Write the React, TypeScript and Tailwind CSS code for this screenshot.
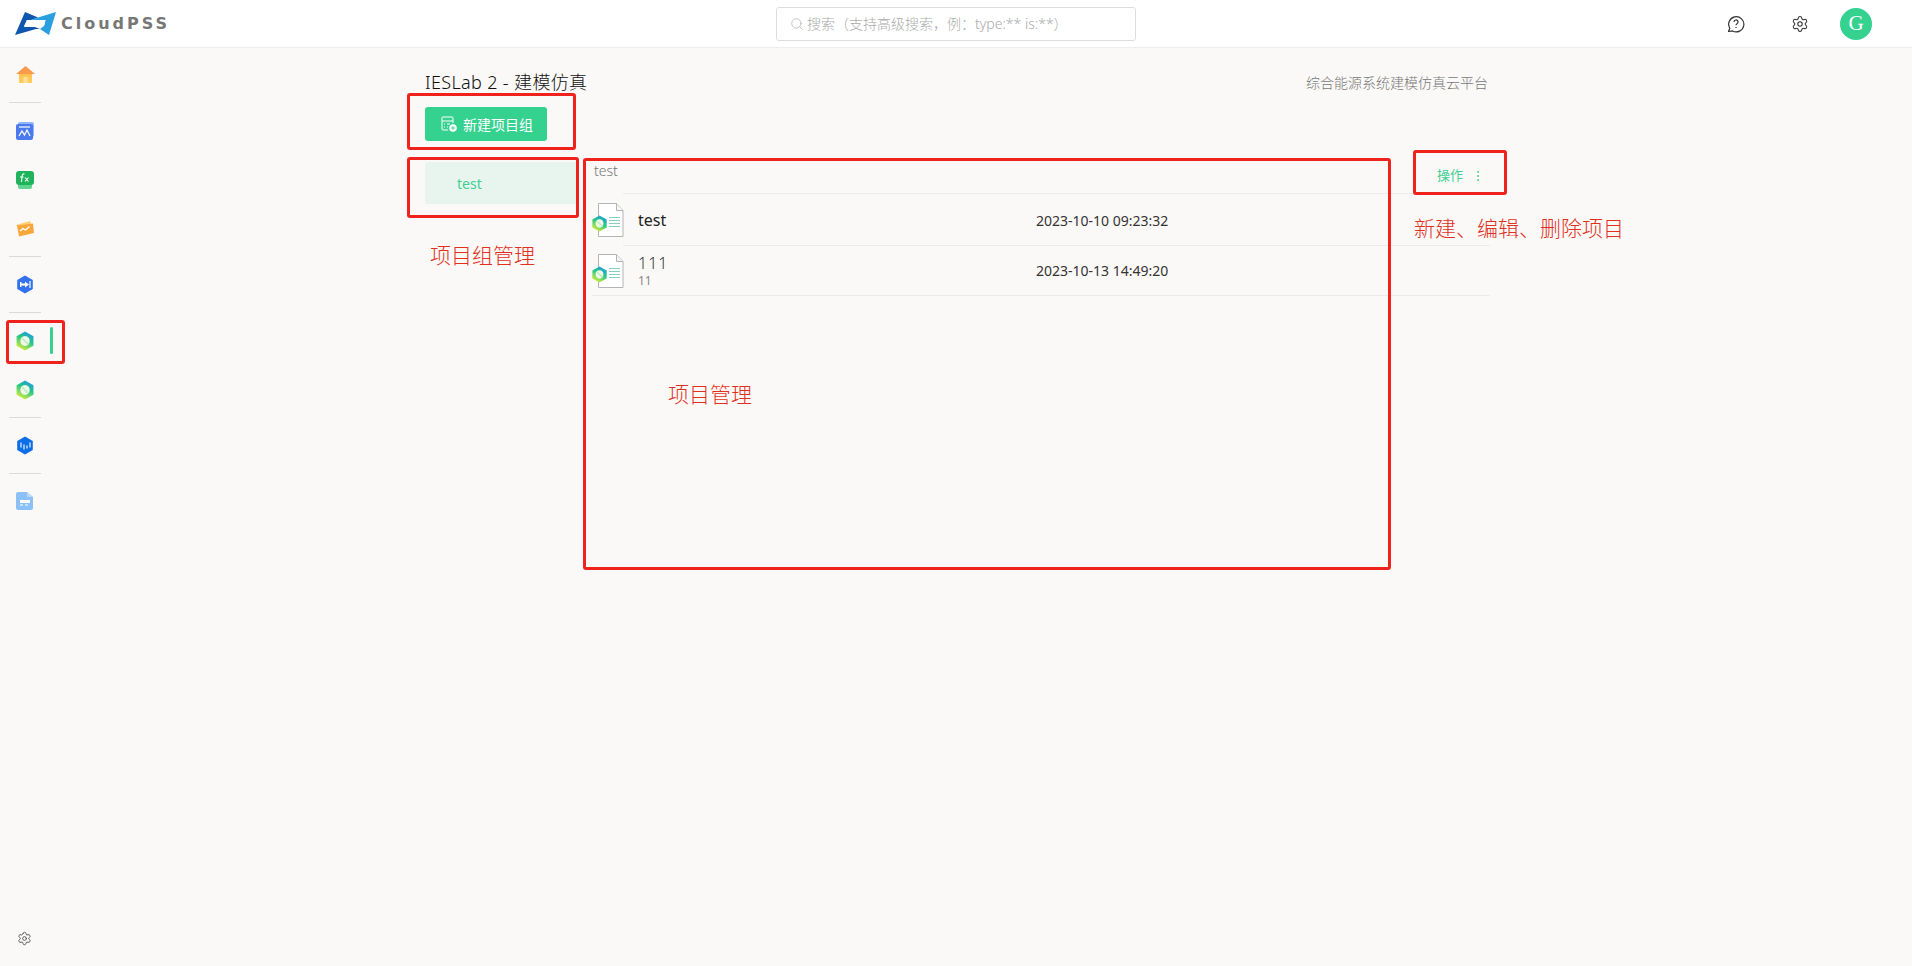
import React from "react";
import { Search, Settings, EllipsisVertical } from "lucide-react";

const Hex = ({ size = 20 }: { size?: number }) => (
  <svg width={size} height={size} viewBox="0 0 18 18" className="block">
    <defs>
      <linearGradient id="hexg" x1="0.85" y1="0" x2="0.35" y2="1">
        <stop offset="0" stopColor="#2a8ff0" />
        <stop offset="0.45" stopColor="#1fc78b" />
        <stop offset="1" stopColor="#d6ec3a" />
      </linearGradient>
    </defs>
    <path d="M9 .5l7.600 4.200v8.600L9 17.500l-7.600-4.200V4.700z" fill="url(#hexg)" />
    <path d="M9 4.600c2.800 0 4.200 2 4.200 4.400s-1.800 4.400-4.200 4.400-4.200-2-4.200-4.400S6.200 4.600 9 4.600z" fill="#eef8e4" />
    <path d="M6.500 6.500L12 12" stroke="#bfe8c8" strokeWidth="1.400" />
  </svg>
);

const HomeIcon = () => (
  <svg width="19" height="17" viewBox="0 0 19 17">
    <defs>
      <linearGradient id="homeg" x1="0" y1="0" x2="0" y2="1">
        <stop offset="0" stopColor="#ffc04d" />
        <stop offset="1" stopColor="#ffcf5c" />
      </linearGradient>
    </defs>
    <path d="M3 7h13v10H3z" fill="url(#homeg)" />
    <path d="M9.500 0L19 8H0z" fill="#fb9a4b" />
    <rect x="7.500" y="11" width="4" height="6" fill="#ffe09a" />
  </svg>
);

const ChartIcon = () => (
  <svg width="18" height="18" viewBox="0 0 18 18">
    <rect x="2" y="0" width="16" height="15" rx="2" fill="#8fb5fb" />
    <rect x="0" y="2" width="17" height="16" rx="2" fill="#4d79ee" />
    <path d="M3 5h11" stroke="#fff" strokeWidth="1.200" />
    <path d="M3 14l3-5 2.500 4 2.500-5 3 6" fill="none" stroke="#fff" strokeWidth="1.200" />
  </svg>
);

const FxIcon = () => (
  <svg width="18" height="18" viewBox="0 0 18 18">
    <rect x="2" y="3" width="14" height="15" rx="2" fill="#5ed48f" />
    <rect x="0" y="0" width="18" height="14" rx="3" fill="#1fb45c" />
    <path d="M8.500 3c-2-.5-2.200 1-2.400 2.500L5.400 11M4 6h3.500" fill="none" stroke="#fff" strokeWidth="1.100" />
    <path d="M9 6.500l3.500 4M12.500 6.500L9 10.500" fill="none" stroke="#fff" strokeWidth="1.100" />
  </svg>
);

const TrendIcon = () => (
  <svg width="18" height="18" viewBox="0 0 18 18">
    <path d="M0 5L14 1l1.500 4L3 8z" fill="#ffcf73" />
    <path d="M1 5.500L17 3.500 18 13 3 16.500z" fill="#f9a63c" />
    <path d="M4 11l3-2.500 2.500 1.500 4-3.500" fill="none" stroke="#fff" strokeWidth="1.300" />
  </svg>
);

const DiodeIcon = () => (
  <svg width="18" height="19" viewBox="0 0 18 18">
    <path d="M9 0l7.800 4.500v9L9 18l-7.800-4.500v-9z" fill="#3272ee" />
    <path d="M4 6.500h1.500V8H9V6l4 3-4 3v-2H5.500v1.500H4z" fill="#fff" />
    <path d="M14 5.500v7" stroke="#fff" strokeWidth="1.200" />
  </svg>
);

const BlueHexIcon = () => (
  <svg width="18" height="19" viewBox="0 0 18 18">
    <path d="M9 0l7.800 4.500v9L9 18l-7.800-4.500v-9z" fill="#0d6ee8" />
    <path d="M5 6v5M8 8v5M11 9v3M14 6v5" stroke="#d8ecff" strokeWidth="1.300" />
  </svg>
);

const FileIcon = () => (
  <svg width="17" height="18" viewBox="0 0 17 18">
    <path d="M2 0h9l6 5v11a2 2 0 0 1-2 2H2a2 2 0 0 1-2-2V2a2 2 0 0 1 2-2z" fill="#8cc1f8" />
    <path d="M11 0l6 5h-6z" fill="#b8d9fb" />
    <rect x="4" y="8" width="10" height="3" fill="#fff" />
    <path d="M4 13h3M9 13h3" stroke="#fff" strokeWidth="1" />
  </svg>
);

const HelpIcon = () => (
  <svg width="18" height="18" viewBox="0 0 18 18" fill="none" stroke="#333" strokeWidth="1.200">
    <path d="M1.500 16.500l1.300-3.200A7.600 7.600 0 1 1 5.500 15.900z" strokeLinejoin="round" />
    <path d="M7 7a2 2 0 1 1 3 1.700c-.7.400-1 .8-1 1.600" />
    <path d="M9 12v1" />
  </svg>
);

const GroupAddIcon = () => (
  <svg width="16" height="16" viewBox="0 0 16 16" fill="none" stroke="#fff" strokeWidth="1">
    <path d="M7 14H2a1 1 0 0 1-1-1V2a1 1 0 0 1 1-1h9a1 1 0 0 1 1 1v5" />
    <path d="M1 5h11M3 8h1M6 8h3M3 11h1M6 11h1" />
    <circle cx="12" cy="12" r="3.800" fill="#fff" stroke="none" />
    <path d="M10.200 12h3.600M12 10.200v3.600" stroke="#35d18f" />
  </svg>
);

const ProjectIcon = () => (
  <div className="relative w-[34px] h-[34px] shrink-0">
    <svg width="34" height="34" viewBox="0 0 34 34" className="block">
      <path d="M6.500.500h18l6.500 7v26H6.500z" fill="#fff" stroke="#b4b4b4" />
      <path d="M24.500.500v7H31" fill="#f4f4f4" stroke="#b4b4b4" />
      <path d="M17 14.500h11M17 17.500h11M17 20.500h11M17 23.500h11" stroke="#86cfbd" strokeWidth="1.200" />
    </svg>
    <div className="absolute -left-px top-[12px]">
      <Hex size={17} />
    </div>
  </div>
);

const Divider = ({ short }: { short?: boolean }) => (
  <div className={short ? "h-[6px] flex items-center" : "h-[7px] flex items-center"}>
    <div className="w-[32px] ml-[9px] h-px bg-[#dcdad8]" />
  </div>
);

const Item = ({ children, active }: { children: React.ReactNode; active?: boolean }) => (
  <div className="relative h-[49px] pl-[16px] flex items-center">
    {children}
    {active && <div className="absolute left-[50px] top-[11px] w-[3px] h-[27px] rounded bg-[#35d18f]" />}
  </div>
);

const Note = ({ className, children }: { className: string; children: string }) => (
  <div className={`absolute text-[21px] leading-[28px] text-[#e0301e] ${className}`}>{children}</div>
);

const Box = ({ className }: { className: string }) => (
  <div className={`absolute border-[3px] border-[#f0231c] rounded-[3px] ${className}`} />
);

export default function App() {
  return (
    <div className="relative h-[966px] w-[1912px] overflow-hidden bg-[#fbf9f7] font-['Noto_Sans','Noto_Sans_CJK_SC',sans-serif] font-light text-[#222]">
      <header className="h-[48px] bg-white border-b border-[#f0eeec] flex items-center relative">
        <div className="flex items-center pl-[15px] w-[776px]">
          <svg width="42" height="23" viewBox="0 0 42 23" className="block">
            <path d="M10 0L23 5.500 16 8H12L9 15H20L25 17 21 17 0 23z" fill="#0e57ad" />
            <path d="M23 5.500L41 0 34 23 25 17 29 14 30.500 8H16z" fill="#2a9fe0" />
            <path d="M12 8H30.500L29 14H25L26.500 11H15L14 14H9z" fill="#fff" opacity="0.950" />
          </svg>
          <span className="ml-[4px] font-['DejaVu_Sans',sans-serif] font-bold text-[16px] tracking-[3px] text-[#777]">CloudPSS</span>
        </div>
        <div className="w-[360px] h-[34px] border border-[#dddddd] rounded-[3px] flex items-center pl-[13px]">
          <Search size={14} className="text-[#bbb]" strokeWidth={1.500} />
          <span className="ml-[3px] text-[14px] text-[#aaa]">搜索（支持高级搜索，例：type:** is:**）</span>
        </div>
        <div className="ml-[591px] flex items-center">
          <HelpIcon />
          <div className="ml-[46px]">
            <Settings size={18} className="text-[#333]" strokeWidth={1.400} />
          </div>
          <div className="ml-[31px] w-[32px] h-[32px] rounded-full bg-[#35d18f] text-white flex items-center justify-center font-['Liberation_Serif',serif] text-[21px]">G</div>
        </div>
      </header>

      <div className="flex h-[918px]">
        <aside className="relative w-[50px] shrink-0 pt-[2px]">
          <Item><HomeIcon /></Item>
          <Divider />
          <Item><ChartIcon /></Item>
          <Item><FxIcon /></Item>
          <Item><TrendIcon /></Item>
          <Divider />
          <Item><DiodeIcon /></Item>
          <Divider />
          <Item active><div className="-ml-px"><Hex /></div></Item>
          <Item><div className="-ml-px"><Hex /></div></Item>
          <Divider />
          <Item><BlueHexIcon /></Item>
          <Divider short />
          <Item><FileIcon /></Item>
          <div className="absolute left-[17px] top-[883px]">
            <Settings size={15} className="text-[#555]" strokeWidth={1.500} />
          </div>
        </aside>

        <main className="ml-[375px] w-[1065px]">
          <div className="h-[59px] flex items-center justify-between pt-[9px]">
            <h1 className="text-[18px] tracking-[0.35px] text-[#111]">IESLab 2 - 建模仿真</h1>
            <span className="text-[14px] text-[#777] mr-[2px]">综合能源系统建模仿真云平台</span>
          </div>
          <button className="w-[122px] h-[34px] rounded-[3px] bg-[#35d18f] text-white text-[14px] flex items-center justify-center gap-[6px] pl-[2px] font-normal">
            <GroupAddIcon />
            <span>新建项目组</span>
          </button>
          <div className="flex mt-[9px]">
            <div className="w-[151px] h-[42px] mt-[12px] bg-[#e8f5ee] rounded-l-[3px] pl-[32px] flex items-center text-[14px] font-normal text-[#3fcf94]">test</div>
            <div className="ml-[16px] flex-1">
              <div className="h-[44px] relative flex items-center justify-between">
                <span className="text-[14px] text-[#777] ml-[2px] -mt-[3px]">test</span>
                <div className="flex items-center gap-[8px] text-[13px] text-[#3fcf94] mr-[4px] mt-[8px] pr-[1px] font-normal">
                  <span>操作</span>
                  <EllipsisVertical size={14} strokeWidth={1.500} />
                </div>
                <div className="absolute left-[31px] right-0 bottom-0 h-px bg-[#eeecea]" />
              </div>
              <div className="h-[52px] relative flex items-center">
                <ProjectIcon />
                <span className="ml-[12px] text-[16px] font-normal text-[#222]">test</span>
                <span className="absolute left-[444px] text-[14px] font-normal text-[#333]">2023-10-10 09:23:32</span>
                <div className="absolute left-[31px] right-0 bottom-0 h-px bg-[#eeecea]" />
              </div>
              <div className="h-[50px] relative flex items-center border-b border-[#eeecea]">
                <ProjectIcon />
                <div className="ml-[12px] flex flex-col">
                  <span className="text-[16px] leading-[20px] text-[#333] tracking-[1px]">111</span>
                  <span className="text-[12px] leading-[16px] text-[#888] font-normal">11</span>
                </div>
                <span className="absolute left-[444px] text-[14px] font-normal text-[#333]">2023-10-13 14:49:20</span>
              </div>
            </div>
          </div>
        </main>
      </div>

      <Box className="left-[6px] top-[320px] w-[59px] h-[44px]" />
      <Box className="left-[407px] top-[93px] w-[169px] h-[57px]" />
      <Box className="left-[407px] top-[157px] w-[172px] h-[61px]" />
      <Box className="left-[583px] top-[158px] w-[808px] h-[412px]" />
      <Box className="left-[1413px] top-[150px] w-[94px] h-[45px]" />
      <Note className="left-[430px] top-[241px]">项目组管理</Note>
      <Note className="left-[668px] top-[380px]">项目管理</Note>
      <Note className="left-[1414px] top-[214px]">新建、编辑、删除项目</Note>
    </div>
  );
}
